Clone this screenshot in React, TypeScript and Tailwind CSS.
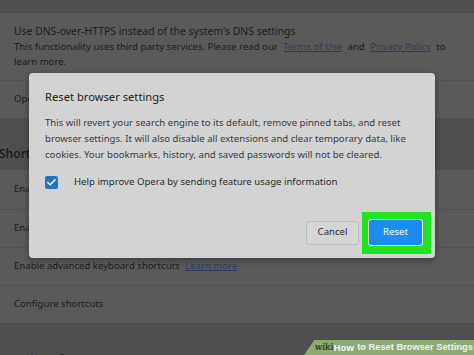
import { Check } from 'lucide-react';

const font = { fontFamily: '"Noto Sans", "Open Sans", sans-serif' };

function Row({ children, className = '' }: { children: React.ReactNode; className?: string }) {
  return (
    <div className={`h-[38px] flex items-center px-[14px] border-t border-[#515151] ${className}`}>
      {children}
    </div>
  );
}

function Link({ children }: { children: React.ReactNode }) {
  return <span className="mx-[3px] text-[#2c3a63] underline underline-offset-1">{children}</span>;
}

export default function App() {
  return (
    <div
      className="relative w-[474px] h-[355px] overflow-hidden bg-[#4f4f4f] text-[#1c1c1c] text-[9.6px]"
      style={font}
    >
      {/* dimmed settings page */}
      <div className="h-[13px] border-b border-[#4a4a4a]" />
      <div className="bg-[#5a5a5a]">
        <div className="px-[14px] pt-[11px] pb-[10px] leading-[15px] h-[67px]">
          <div className="text-[10.4px]">Use DNS-over-HTTPS instead of the system's DNS settings</div>
          <div className="text-[9.6px] whitespace-nowrap">
            This functionality uses third party services. Please read our <Link>Terms of Use</Link> and{' '}
            <Link>Privacy Policy</Link> to
            <br />
            learn more.
          </div>
        </div>
        <Row>Open</Row>
      </div>
      <div className="h-[52px] flex items-end pb-[7px] text-[12px] font-semibold -ml-[1px]">Shortcuts</div>
      <div className="bg-[#5a5a5a]">
        <Row className="h-[39px] border-t-0">Enable shortcuts</Row>
        <Row>Enable mouse gestures</Row>
        <Row>
          Enable advanced keyboard shortcuts&nbsp;<Link>Learn more</Link>
        </Row>
        <Row>Configure shortcuts</Row>
      </div>
      <div className="border-t border-[#4a4a4a] pt-[27px] text-[12px] font-semibold">User interface</div>

      {/* dialog */}
      <div className="absolute left-[29px] top-[73px] w-[406px] h-[185px] bg-[#d3d3d3] rounded-[4px] shadow-[0_2px_6px_rgba(0,0,0,0.35)] flex flex-col px-[16px] pt-[15px] pb-[12px]">
        <div className="text-[11.2px] leading-[18px] text-[#222]">Reset browser settings</div>
        <div className="mt-[9px] text-[9.6px] leading-[16px] text-[#3a3a3a]">
          This will revert your search engine to its default, remove pinned tabs, and reset browser settings. It
          will also disable all extensions and clear temporary data, like cookies. Your bookmarks, history, and
          saved passwords will not be cleared.
        </div>
        <div className="mt-[12px] flex items-center gap-[16px] text-[9.6px] text-[#2a2a2a]">
          <div className="w-[13px] h-[13px] rounded-[2px] bg-[#2474c6] flex items-center justify-center">
            <Check size={11} strokeWidth={3} color="#ffffff" />
          </div>
          <span>Help improve Opera by sending feature usage information</span>
        </div>
        <div className="mt-auto flex justify-end items-center gap-[9px] -mr-[4px]">
          <button className="w-[53px] h-[24px] rounded-[3px] bg-[#d6d6d6] border border-[#bcbcbc] text-[9.6px] text-[#2a2a2a]">
            Cancel
          </button>
          {/* green highlight box around Reset */}
          <div className="bg-[#22e31f] pl-[6px] pt-[7px] pr-[8px] pb-[8px] -ml-[6px] -mt-[7px] -mr-[8px] -mb-[8px]">
            <button className="block w-[55px] h-[27px] rounded-[3px] bg-[#1a8cf3] border border-[#e4f6e4] text-white text-[9.6px]">
              Reset
            </button>
          </div>
        </div>
      </div>

      {/* watermark */}
      <div className="absolute right-0 bottom-0 w-[170px] h-[15px] bg-[#8eaa72] [clip-path:polygon(6%_0,100%_0,100%_100%,0_100%)] flex items-center pl-[11px] text-[9.3px] font-bold leading-none">
        <span className="text-[#3b3f2a] font-serif">wiki</span>
        <span className="text-[#f3f3f3]">How</span>
        <span className="text-[#f3f3f3] ml-[3px]" style={{ fontFamily: '"Liberation Sans", sans-serif' }}>
          to Reset Browser Settings
        </span>
      </div>
    </div>
  );
}
